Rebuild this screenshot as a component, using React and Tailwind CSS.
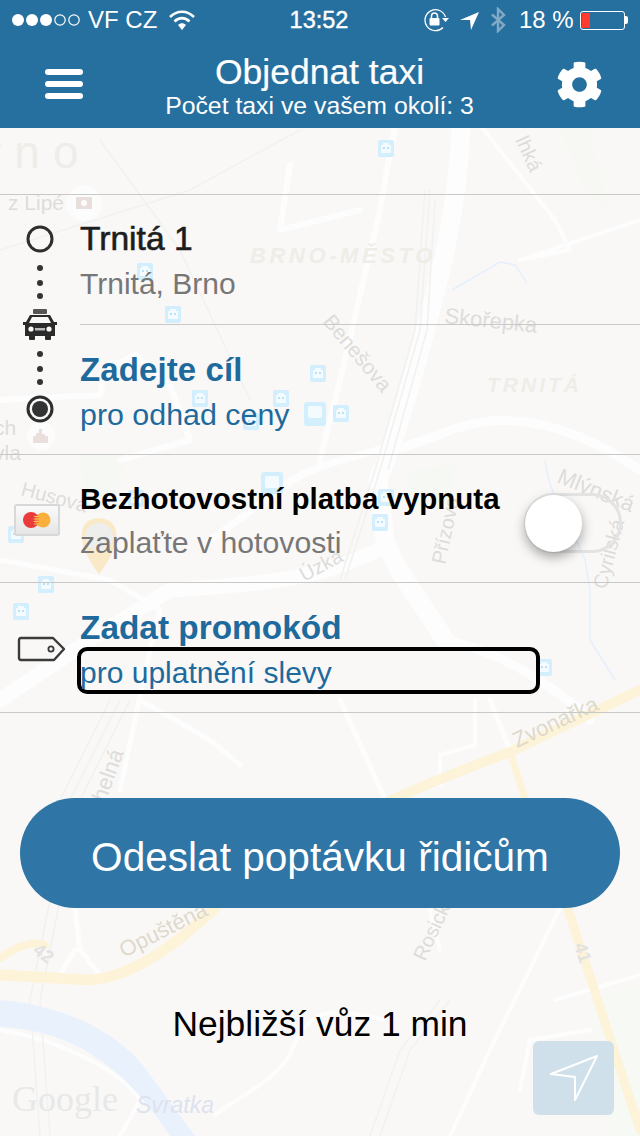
import React from "react";
import { FaCog } from "react-icons/fa";

const sans = "font-['Liberation_Sans',Arial,sans-serif]";

const Poi = ({ x, y }) => (
  <g>
    <rect x={x} y={y} width="16" height="17" rx="2" fill="#d3eefc" />
    <rect x={x + 3} y={y + 5} width="10" height="8" fill="#f4fbff" />
    <rect x={x + 5} y={y + 3} width="6" height="3" fill="#f4fbff" />
    <rect x={x + 5} y={y + 7} width="2" height="2" fill="#b9e2f8" />
    <rect x={x + 9} y={y + 7} width="2" height="2" fill="#b9e2f8" />
  </g>
);

// podkladová mapa
const MapLayer = () => (
  <svg className="absolute inset-0" width="640" height="1136" viewBox="0 0 640 1136">
    <rect width="640" height="1136" fill="#f9f8f7" />
    <path d="M80 455 L125 455 L115 505 L85 505Z" fill="#f6f8f3" />
    <path d="M410 470 L455 465 L450 510 L405 505Z" fill="#f6f8f3" />
    <path d="M560 130 L590 130 L610 210 L585 190Z" fill="#f7f8f4" />
    <path d="M590 1000 L640 985 L640 1136 L610 1136Z" fill="#f7f9f4" />

    {/* bílé ulice */}
    <g fill="none" stroke="#fdfdfd" strokeLinecap="round" strokeLinejoin="round">
      <path d="M461 128 C458 200 445 260 424 335 C410 390 395 440 378 480 L385 540 C395 570 420 600 445 640" strokeWidth="19" />
      <path d="M385 545 C330 580 250 585 170 590 L90 640 L0 700" strokeWidth="15" />
      <path d="M445 640 C500 650 560 690 590 720" strokeWidth="9" />
      <path d="M378 450 C420 450 440 425 500 420 C560 420 610 450 640 470" strokeWidth="9" />
      <path d="M378 450 C340 460 300 470 280 490 L210 540" strokeWidth="7" />
      <path d="M395 125 L380 210 L340 380 L320 460" strokeWidth="6" />
      <path d="M0 560 L110 580 L160 610 L150 650 L120 790" strokeWidth="5" />
      <path d="M290 165 L280 230 L360 210" strokeWidth="6" />
      <path d="M480 125 L555 220 L570 250 L520 260 L640 220" strokeWidth="4" />
      <path d="M140 700 L210 740 L240 765" strokeWidth="5" />
      <path d="M340 700 L390 810" strokeWidth="5" />
      <path d="M490 700 L510 750" strokeWidth="5" />
      <path d="M440 785 L440 755 L475 745 L475 700" strokeWidth="4" />
      <path d="M0 400 L100 395 L105 370 L135 355 L170 385 L190 440 L120 460" strokeWidth="6" />
      <path d="M430 910 L440 950 M560 908 L490 1050 L450 1136" strokeWidth="4" />
      <path d="M0 1030 C60 1040 120 1070 140 1100 L120 1136" strokeWidth="4" />
      <path d="M215 1115 C240 1095 270 1085 290 1055 C310 1000 340 1010 385 1020" strokeWidth="4" />
      <path d="M75 908 L80 950 M75 950 L60 975 M80 950 L100 975" strokeWidth="5" />
      <path d="M555 1000 L640 975 M520 1090 L530 1040 L590 1030" strokeWidth="4" />
    </g>

    {/* železnice */}
    <g fill="none" stroke="#f1f1f0" strokeWidth="1.5">
      <path d="M425 190 L415 330 L375 470 L340 580 M430 190 L420 330 L380 470 L345 580 M435 200 L427 330 L388 470" />
      <path d="M130 700 L80 800 L40 1000 L50 1136 M120 700 L70 800 L30 1000 L40 1136 M110 700 L60 800" />
      <path d="M440 1000 L400 1050 L370 1136 M450 1000 L410 1050 L380 1136" />
      <path d="M100 140 L180 250 L250 400 M0 250 L190 190 L300 130" />
    </g>

    {/* hlavní silnice */}
    <g fill="none" stroke="#fdf3d8" strokeLinecap="round" strokeLinejoin="round">
      <path d="M640 690 L510 752 C450 775 410 790 360 815" strokeWidth="10" />
      <path d="M510 752 L535 830" strokeWidth="7" />
      <path d="M565 900 L640 1130" strokeWidth="9" />
      <path d="M0 975 L90 980 C130 977 170 950 215 908" strokeWidth="11" />
      <path d="M0 958 C15 948 30 940 45 945" strokeWidth="8" />
    </g>

    {/* řeka */}
    <path d="M0 1000 C60 1005 120 1030 150 1075 L195 1136 L170 1136 C130 1075 80 1030 0 1027Z" fill="#e9f1fd" />
    <g fill="none" stroke="#e6effc" strokeWidth="1.5">
      <path d="M452 290 L500 262 L515 265 L527 283" />
      <path d="M545 460 C550 500 570 520 585 560 L590 590 L590 640 L615 680" />
    </g>

    <g fontFamily="'Liberation Sans',Arial,sans-serif">
      <text x="-14" y="168" fontSize="46" letterSpacing="13" fill="#eeede9">rno</text>
      <text x="8" y="210" fontSize="21" fill="#dedcda">z Lipé</text>
      <text x="-6" y="435" fontSize="21" fill="#dedcda">ch</text>
      <text x="-6" y="460" fontSize="21" fill="#dedcda">vla</text>
      <text x="250" y="263" fontSize="22" fontWeight="700" fontStyle="italic" letterSpacing="3.6" fill="#eeede8">BRNO-MĚSTO</text>
      <text x="487" y="392" fontSize="21" fontWeight="700" fontStyle="italic" letterSpacing="3" fill="#eeede8">TRNITÁ</text>
      <text x="444" y="323" fontSize="22" fill="#dedcda" transform="rotate(6 444 323)">Skořepka</text>
      <text x="322" y="322" fontSize="21" fill="#dedcda" transform="rotate(50 322 322)">Benešova</text>
      <text x="515" y="140" fontSize="20" fill="#dedcda" transform="rotate(65 515 140)">lhká</text>
      <text x="20" y="495" fontSize="20" fill="#dedcda" transform="rotate(15 20 495)">Husova</text>
      <text x="304" y="582" fontSize="20" fill="#dedcda" transform="rotate(-28 304 582)">Úzka</text>
      <text x="445" y="565" fontSize="20" fill="#dedcda" transform="rotate(-78 445 565)">Přízova</text>
      <text x="556" y="482" fontSize="22" fill="#dedcda" transform="rotate(22 556 482)">Mlýnská</text>
      <text x="606" y="590" fontSize="20" fill="#dedcda" transform="rotate(-75 606 590)">Cyrilská</text>
      <text x="517" y="748" fontSize="22" fill="#dfd9cc" transform="rotate(-25 517 748)">Zvonařka</text>
      <text x="100" y="818" fontSize="22" fill="#dedcda" transform="rotate(-70 100 818)">Uhelná</text>
      <text x="124" y="958" fontSize="22" fill="#dfd9cc" transform="rotate(-27 124 958)">Opuštěná</text>
      <text x="425" y="962" fontSize="20" fill="#dedcda" transform="rotate(-65 425 962)">Rosická</text>
      <text x="32" y="952" fontSize="18" fontWeight="700" fill="#e2e2e0" transform="rotate(38 32 952)">42</text>
      <text x="574" y="945" fontSize="18" fontWeight="700" fill="#e2e2e0" transform="rotate(72 574 945)">41</text>
      <text x="136" y="1113" fontSize="23" fontStyle="italic" fill="#dde3ee">Svratka</text>
      <text x="12" y="1111" fontSize="36" fontFamily="'Liberation Serif',serif" fill="#e8e8e7">Google</text>
    </g>

    <Poi x={378} y={140} />
    <Poi x={137} y={263} />
    <Poi x={165} y={306} />
    <Poi x={310} y={365} />
    <Poi x={192} y={390} />
    <Poi x={333} y={405} />
    <Poi x={243} y={413} />
    <Poi x={273} y={390} />
    <Poi x={128} y={490} />
    <Poi x={372} y={514} />
    <Poi x={8} y={526} />
    <Poi x={38} y={576} />
    <Poi x={13} y={603} />
    <Poi x={536} y={659} />
    <Poi x={378} y={489} />
    <rect x="304" y="402" width="22" height="24" rx="3" fill="#d3eefc" />
    <rect x="308" y="406" width="14" height="12" rx="2" fill="#f4fbff" />
    <rect x="261" y="472" width="22" height="22" rx="3" fill="#d3eefc" />
    <rect x="265" y="476" width="14" height="12" rx="2" fill="#f4fbff" />
    <circle cx="84" cy="203" r="18" fill="#fcfcfc" />
    <rect x="76" y="197" width="16" height="12" rx="1" fill="#e8dfdc" />
    <circle cx="84" cy="203" r="3" fill="#fcfcfc" />
    <circle cx="41" cy="436" r="14" fill="#fcfcfc" />
    <path d="M33 443 V436 h3 v-3 h3 v-4 h3 v5 h3 v2 h3 v7Z" fill="#eadfdc" />

    {/* značka taxi */}
    <path d="M99 574 C76 545 76 519 99 518 C122 519 122 545 99 574Z" fill="#f9e9c7" />
    <circle cx="99" cy="537" r="14" fill="#eeeeec" />
  </svg>
);

const StatusBar = () => (
  <div className="flex h-[40px] items-center text-white text-[24px] leading-[40px]">
    <svg width="84" height="40" viewBox="0 0 84 40" className="shrink-0">
      <circle cx="18" cy="20" r="6" fill="#fff" />
      <circle cx="32" cy="20" r="6" fill="#fff" />
      <circle cx="46" cy="20" r="6" fill="#fff" />
      <circle cx="60" cy="20" r="5.2" fill="none" stroke="#fff" strokeWidth="1.2" />
      <circle cx="74" cy="20" r="5.2" fill="none" stroke="#fff" strokeWidth="1.2" />
    </svg>
    <span className="ml-[4px] w-[80px]">VF CZ</span>
    <svg width="28" height="22" viewBox="0 0 28 22" className="shrink-0">
      <path d="M2 8 C9 1 19 1 26 8 M6.5 12.5 C11 8 17 8 21.5 12.5" fill="none" stroke="#fff" strokeWidth="2.6" />
      <path d="M10 16 C12.5 13.5 15.5 13.5 18 16 L14 21Z" fill="#fff" />
    </svg>
    <span className="ml-[92px] w-[62px] text-center text-[23.5px] [-webkit-text-stroke:0.4px_white]">13:52</span>
    <svg width="30" height="24" viewBox="0 0 30 24" className="ml-[72px] shrink-0">
      <path d="M21 19.5 A10.5 10.5 0 1 1 23.5 9" fill="none" stroke="#fff" strokeWidth="1.3" />
      <path d="M20 10 h7 l-3.5 4Z" fill="#fff" />
      <rect x="7.5" y="10" width="10" height="7.5" rx="1" fill="#fff" />
      <path d="M9.5 10 V8 a3 3 0 0 1 6 0 V10" fill="none" stroke="#fff" strokeWidth="1.5" />
    </svg>
    <svg width="20" height="20" viewBox="0 0 20 20" className="ml-[8px] shrink-0">
      <path d="M0 10 L19 2 L11 20 L10 10Z" fill="#fff" />
    </svg>
    <svg width="18" height="26" viewBox="0 0 18 26" className="ml-[9px] shrink-0">
      <path d="M3 7.5 L15 18 L9 24 V2 L15 8 L3 18.5" fill="none" stroke="#82a9c5" strokeWidth="2.4" />
    </svg>
    <span className="ml-[12px] w-[56px]">18 %</span>
    <div className="ml-[5px] flex items-center">
      <div className="h-[19px] w-[45px] rounded-[3px] border border-white p-[1px]">
        <div className="h-full w-[8px] bg-[#ff3b30]" />
      </div>
      <div className="h-[8px] w-[3px] rounded-r-[2px] bg-white" />
    </div>
  </div>
);

const Header = () => (
  <header className="relative h-[128px] bg-[#26709f] text-white">
    <StatusBar />
    <div className="flex h-[88px] items-center">
      <div className="ml-[45px] flex w-[38px] flex-col gap-[6px]">
        <div className="h-[6px] rounded-full bg-white" />
        <div className="h-[6px] rounded-full bg-white" />
        <div className="h-[6px] rounded-full bg-white" />
      </div>
      <div className="flex-1 pt-[3px] text-center whitespace-nowrap">
        <div className="text-[35.5px] leading-[40px] [-webkit-text-stroke:0.2px_white]">Objednat taxi</div>
        <div className="text-[24.8px] leading-[28px]">Počet taxi ve vašem okolí: 3</div>
      </div>
      <FaCog size={47} className="mr-[37px] shrink-0" />
    </div>
  </header>
);

const RouteIcons = () => (
  <svg width="80" height="259" viewBox="0 195 80 259" className="shrink-0">
    <circle cx="40" cy="239" r="12" fill="none" stroke="#2e2e2e" strokeWidth="3" />
    <g fill="#333">
      <circle cx="40" cy="268" r="3" />
      <circle cx="40" cy="283" r="3" />
      <circle cx="40" cy="296" r="3" />
      <circle cx="40" cy="354" r="3" />
      <circle cx="40" cy="369" r="3" />
      <circle cx="40" cy="382" r="3" />
    </g>
    <circle cx="40" cy="409" r="12" fill="none" stroke="#2e2e2e" strokeWidth="3" />
    <circle cx="40" cy="409" r="8" fill="#333" />
    {/* taxi */}
    <rect x="33" y="309" width="14" height="5" rx="1" fill="#555" />
    <path d="M30 315 H50 L54 322 H57 V325 H55 V336 H25 V325 H23 V322 H26Z" fill="#2a2a2a" />
    <path d="M32 317 H48 L51 323 H29Z" fill="#f9f8f7" />
    <circle cx="31" cy="329" r="2.6" fill="#f9f8f7" />
    <circle cx="49" cy="329" r="2.6" fill="#f9f8f7" />
    <rect x="35" y="328" width="10" height="2.5" fill="#bbb" />
    <rect x="29" y="335" width="6" height="5" rx="1" fill="#2a2a2a" />
    <rect x="45" y="335" width="6" height="5" rx="1" fill="#2a2a2a" />
  </svg>
);

const Payment = () => (
  <div className="flex h-[32px] w-[46px] items-center justify-center rounded-[3px] border-2 border-[#d8d8d8] bg-gradient-to-b from-[#fafafa] to-[#e6e6e6]">
    <svg width="30" height="16" viewBox="0 0 30 16">
      <circle cx="21" cy="8" r="7.5" fill="#fbb03b" />
      <circle cx="9" cy="8" r="8" fill="#ea3a3e" />
      <path d="M15 3 A8 8 0 0 1 15 13 A7.5 7.5 0 0 1 15 3Z" fill="#f2823a" />
      <path d="M12 4.5 H17 M11.5 7 H17.5 M11.5 9.5 H17.5 M12 12 H17" stroke="#f7c14f" strokeWidth="1" />
    </svg>
  </div>
);

const TagIcon = () => (
  <svg width="50" height="26" viewBox="0 0 50 26">
    <path d="M4 2 H36 L47 13 L37 24 H4 Q2 24 2 22 V4 Q2 2 4 2Z" fill="none" stroke="#3b3b3b" strokeWidth="2.4" strokeLinejoin="round" />
    <circle cx="34" cy="13" r="2.6" fill="none" stroke="#3b3b3b" strokeWidth="1.8" />
  </svg>
);

export default function App() {
  return (
    <div className={`relative h-[1136px] w-[640px] overflow-hidden ${sans}`}>
      <MapLayer />
      <div className="relative flex h-full flex-col">
        <Header />

        <section className="mt-[66px] flex border-y border-[#c8c8c6]">
          <RouteIcons />
          <div className="flex-1">
            <div className="h-[130px] border-b border-[#c8c8c6] pt-[24px]">
              <div className="text-[33.6px] leading-[40px] text-[#1d1d1d] [-webkit-text-stroke:0.6px_#1d1d1d]">Trnitá 1</div>
              <div className="mt-[5px] text-[30px] leading-[40px] text-[#777]">Trnitá, Brno</div>
            </div>
            <div className="pt-[25px]">
              <div className="text-[33px] leading-[40px] font-bold text-[#1f6a9c] tracking-[0.1px]">Zadejte cíl</div>
              <div className="mt-[4px] text-[30.4px] leading-[40px] text-[#1f6a9c]">pro odhad ceny</div>
            </div>
          </div>
        </section>

        <section className="flex h-[128px] border-b border-[#c8c8c6]">
          <div className="w-[80px] shrink-0 pt-[49px] pl-[14px]">
            <Payment />
          </div>
          <div className="w-[444px] pt-[26px] whitespace-nowrap">
            <div className="text-[29.5px] leading-[36px] font-bold text-black">Bezhotovostní platba vypnuta</div>
            <div className="mt-[8px] text-[30.2px] leading-[36px] text-[#777]">zaplaťte v hotovosti</div>
          </div>
          <div className="pt-[38px]">
            <div className="relative h-[60px] w-[98px] rounded-full border-[3px] border-[#e3e3e3]">
              <div className="absolute left-[-2px] top-[-1px] h-[57px] w-[57px] rounded-full bg-white shadow-[0_5px_12px_rgba(0,0,0,0.35)]" />
            </div>
          </div>
        </section>

        <section className="flex h-[130px] border-b border-[#c8c8c6]">
          <div className="flex w-[80px] shrink-0 items-center justify-center pt-[2px] pl-[4px]">
            <TagIcon />
          </div>
          <div className="flex-1 pt-[25px]">
            <div className="text-[33.4px] leading-[40px] font-bold text-[#1f6a9c]">Zadat promokód</div>
            <div className="-ml-[3px] mt-[-1px] h-[47px] w-[463px] rounded-[10px] border-4 border-black text-[30px] leading-[44px] text-[#1f6a9c]">
              <span className="-ml-[1px]">pro uplatnění slevy</span>
            </div>
          </div>
        </section>

        <button className="mx-[20px] mt-[85px] h-[110px] rounded-full bg-[#2f75a5] pt-[8px] text-[40.6px] whitespace-nowrap text-white">
          Odeslat poptávku řidičům
        </button>

        <div className="mt-[94px] text-center text-[35.4px] leading-[44px] text-black">Nejbližší vůz 1 min</div>

        <div className="mt-[-5px] mr-[26px] flex h-[74px] w-[81px] items-center justify-center self-end rounded-[6px] bg-[#cfe0ea]">
          <svg width="50" height="48" viewBox="0 0 50 48">
            <path d="M2 20 L48 2 L26 46 L26 23Z" fill="none" stroke="#fff" strokeWidth="2" strokeLinejoin="round" />
          </svg>
        </div>
      </div>
    </div>
  );
}
